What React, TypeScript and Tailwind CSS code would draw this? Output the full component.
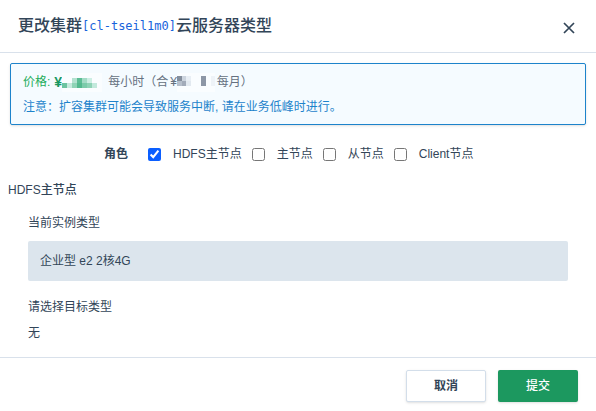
import React from "react";

const roles = [
  { id: "hdfs-master", label: "HDFS主节点", checked: true },
  { id: "master", label: "主节点", checked: false },
  { id: "slave", label: "从节点", checked: false },
  { id: "client", label: "Client节点", checked: false },
];

type Block = [x: number, y: number, w: number, h: number, color: string];

const hourlyBlocks: Block[] = [
  [0, 10, 5, 5, "#6cc4a0"],
  [5, 10, 5, 5, "#c5eadd"],
  [10, 5, 5, 5, "#b3e2d0"],
  [10, 10, 5, 5, "#8ed3b6"],
  [15, 5, 5, 5, "#5cbd95"],
  [15, 10, 5, 5, "#53b98e"],
  [20, 5, 5, 5, "#a3dcc6"],
  [20, 10, 5, 5, "#7bcbaa"],
  [25, 5, 5, 5, "#cdeee4"],
  [25, 10, 5, 5, "#8ed3b6"],
  [30, 10, 5, 5, "#c2e9dc"],
];

const monthlyBlocks: Block[] = [
  [0, 3, 5, 5, "#848e9c"],
  [5, 3, 4, 5, "#ccd4de"],
  [9, 3, 5, 5, "#e9eff5"],
  [0, 8, 5, 5, "#b6bfcb"],
  [5, 8, 4, 5, "#a2abb9"],
  [9, 8, 5, 5, "#e2e9f0"],
  [24, 3, 5, 10, "#8d97a6"],
  [34, 3, 4, 10, "#eef3f8"],
];

function Mosaic({ blocks, width }: { blocks: Block[]; width: number }) {
  return (
    <svg width={width} height={19} aria-hidden="true" className="shrink-0 bg-[#fafdff]">
      {blocks.map(([x, y, w, h, color]) => (
        <rect key={`${x}-${y}`} x={x} y={y} width={w} height={h} fill={color} />
      ))}
    </svg>
  );
}

export default function App() {
  return (
    <div
      role="dialog"
      aria-labelledby="dialog-title"
      className="bg-white font-['Liberation_Sans','Noto_Sans_CJK_SC',sans-serif] text-xs text-[#324558]"
    >
      <header className="flex items-center justify-between border-b border-[#d9e1eb] py-3.5 pr-5 pl-4.5">
        <h1 id="dialog-title" className="flex items-center text-base leading-6 font-medium">
          更改集群
          <code className="font-['DejaVu_Sans_Mono',monospace] text-xs font-normal text-[#1763dc]">[cl-tseil1m0]</code>
          云服务器类型
        </h1>
        <button type="button" aria-label="关闭" className="pt-1">
          <svg width="14" height="14" viewBox="0 0 14 14" fill="none" stroke="#324558" strokeWidth="1.7">
            <path d="M2 2l10 10M12 2L2 12" />
          </svg>
        </button>
      </header>

      <main className="px-2 pt-2.5 pb-3">
        <section className="mx-0.5 rounded-xs border border-[#1d83cb] bg-[#f5fbff] px-3 pt-1.5 pb-1 leading-[25px] shadow-sm">
          <p className="flex items-center text-[#657181]">
            <span className="text-[#24ad5b]">价格:</span>
            <b className="ml-1 text-sm leading-[25px] text-[#18975f]">¥</b>
            <Mosaic blocks={hourlyBlocks} width={40} />
            <span className="ml-1.5">每小时（合</span>
            <span className="ml-0.5">¥</span>
            <Mosaic blocks={monthlyBlocks} width={38} />
            <span className="ml-0.5">每月）</span>
          </p>
          <p className="text-[#1d83cb]">注意：扩容集群可能会导致服务中断, 请在业务低峰时进行。</p>
        </section>

        <fieldset className="mt-[17px] flex items-center pl-24 leading-6">
          <legend className="float-left mr-5 font-bold">角色</legend>
          {roles.map((role) => (
            <div key={role.id} className="mr-2.5 flex items-center gap-3">
              <input id={role.id} type="checkbox" defaultChecked={role.checked} className="size-[13px] accent-[#0b5fff]" />
              <label htmlFor={role.id}>{role.label}</label>
            </div>
          ))}
        </fieldset>

        <h2 className="mt-3 leading-6 font-medium">HDFS主节点</h2>
        <div className="px-5 pt-[9px] leading-6">
          <h3>当前实例类型</h3>
          <p className="mt-1.5 rounded-xs bg-[#dce5ed] px-3 py-2">企业型 e2 2核4G</p>
          <h3 className="mt-3.5">请选择目标类型</h3>
          <p className="mt-0.5">无</p>
        </div>
      </main>

      <footer className="flex justify-end gap-3 border-t border-[#d9e1eb] px-4.5 py-3">
        <button type="button" className="h-8 w-20 rounded-xs border border-[#d3deea] bg-white font-semibold shadow-sm">
          取消
        </button>
        <button type="button" className="h-8 w-20 rounded-xs bg-[#1c985f] font-medium text-white shadow-sm">
          提交
        </button>
      </footer>
    </div>
  );
}
